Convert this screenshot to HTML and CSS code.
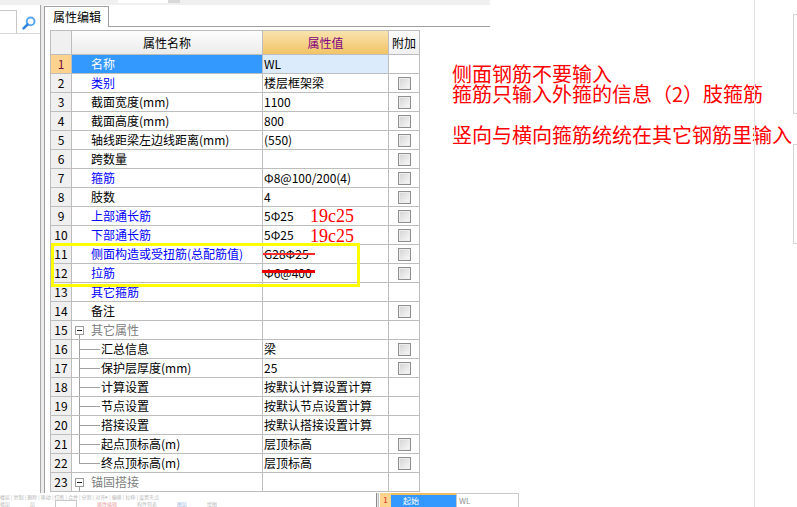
FILE: index.html
```html
<!DOCTYPE html>
<html lang="zh">
<head>
<meta charset="utf-8">
<title>属性编辑</title>
<link rel="stylesheet" href="styles.css">
</head>
<body>
<div class="page">
  <div class="work">
    <div class="topstrip"><div class="notch"></div><div class="notch2"></div></div>
    <div class="app">
      <div class="leftpane">
        <div class="searchrow">
          <div class="searchbox"></div>
          <svg class="mag" viewBox="0 0 14 14" width="14" height="14">
            <circle cx="8.6" cy="5.4" r="3.9" fill="none" stroke="#58a6ec" stroke-width="2"/>
            <line x1="5.7" y1="8.3" x2="1.6" y2="12.4" stroke="#2f86dc" stroke-width="2.6" stroke-linecap="round"/>
          </svg>
        </div>
      </div>
      <div class="splitter"></div>
      <div class="main">
        <div class="tabrow"><div class="tab">属性编辑</div><div class="tabline"></div></div>
        <div class="panel">
          <div class="gridwrap">
            <div class="grid">
              <div class="c h n"></div><div class="c h">属性名称</div><div class="c h hv">属性值</div><div class="c h ha">附加</div>

              <div class="c n nsel">1</div><div class="c nm sel">名称</div><div class="c v vsel">WL</div><div class="c a"></div>
              <div class="c n">2</div><div class="c nm blue">类别</div><div class="c v">楼层框架梁</div><div class="c a"><span class="cb"></span></div>
              <div class="c n">3</div><div class="c nm">截面宽度(mm)</div><div class="c v">1100</div><div class="c a"><span class="cb"></span></div>
              <div class="c n">4</div><div class="c nm">截面高度(mm)</div><div class="c v">800</div><div class="c a"><span class="cb"></span></div>
              <div class="c n">5</div><div class="c nm">轴线距梁左边线距离(mm)</div><div class="c v">(550)</div><div class="c a"><span class="cb"></span></div>
              <div class="c n">6</div><div class="c nm">跨数量</div><div class="c v"></div><div class="c a"><span class="cb"></span></div>
              <div class="c n">7</div><div class="c nm blue">箍筋</div><div class="c v">Φ8@100/200(4)</div><div class="c a"><span class="cb"></span></div>
              <div class="c n">8</div><div class="c nm">肢数</div><div class="c v">4</div><div class="c a"><span class="cb"></span></div>
              <div class="c n">9</div><div class="c nm blue">上部通长筋</div><div class="c v">5Φ25</div><div class="c a"><span class="cb"></span></div>
              <div class="c n">10</div><div class="c nm blue">下部通长筋</div><div class="c v">5Φ25</div><div class="c a"><span class="cb"></span></div>
              <div class="c n">11</div><div class="c nm blue">侧面构造或受扭筋(总配筋值)</div><div class="c v">G28Φ25</div><div class="c a"><span class="cb"></span></div>
              <div class="c n">12</div><div class="c nm blue">拉筋</div><div class="c v">Φ6@400</div><div class="c a"><span class="cb"></span></div>
              <div class="c n">13</div><div class="c nm blue">其它箍筋</div><div class="c v"></div><div class="c a"></div>
              <div class="c n">14</div><div class="c nm">备注</div><div class="c v"></div><div class="c a"><span class="cb"></span></div>
              <div class="c n">15</div><div class="c tr grp"><span class="node"><span class="box"></span></span>其它属性</div><div class="c v"></div><div class="c a"></div>
              <div class="c n">16</div><div class="c tr"><span class="br"></span>汇总信息</div><div class="c v">梁</div><div class="c a"><span class="cb"></span></div>
              <div class="c n">17</div><div class="c tr"><span class="br"></span>保护层厚度(mm)</div><div class="c v">25</div><div class="c a"><span class="cb"></span></div>
              <div class="c n">18</div><div class="c tr"><span class="br"></span>计算设置</div><div class="c v">按默认计算设置计算</div><div class="c a"></div>
              <div class="c n">19</div><div class="c tr"><span class="br"></span>节点设置</div><div class="c v">按默认节点设置计算</div><div class="c a"></div>
              <div class="c n">20</div><div class="c tr"><span class="br"></span>搭接设置</div><div class="c v">按默认搭接设置计算</div><div class="c a"></div>
              <div class="c n">21</div><div class="c tr"><span class="br"></span>起点顶标高(m)</div><div class="c v">层顶标高</div><div class="c a"><span class="cb"></span></div>
              <div class="c n">22</div><div class="c tr"><span class="br last"></span>终点顶标高(m)</div><div class="c v">层顶标高</div><div class="c a"><span class="cb"></span></div>
              <div class="c n">23</div><div class="c tr grp"><span class="node"><span class="box"></span></span>锚固搭接</div><div class="c v"></div><div class="c a"></div>
            </div>
            <div class="hl-box"></div>
            <div class="strike s1"></div>
            <div class="strike s2"></div>
            <div class="note19 n1">19c25</div>
            <div class="note19 n2">19c25</div>
          </div>
          <div class="notes">
            <div class="nl">侧面钢筋不要输入</div>
            <div class="nl">箍筋只输入外箍的信息（2）肢箍筋</div>
            <div class="nl gap">竖向与横向箍筋统统在其它钢筋里输入</div>
          </div>
        </div>
      </div>
    </div>
    <div class="bottombar">
      <div class="bb-left">
        <div class="bb-r1"><span class="bb-txt">楼层 | 复制 | 删除 | 移动 | 打断 | 合并 | 分割 | 对齐▾ | 偏移 | 拉伸 | 设置夹点</span></div>
        <div class="bb-r2"><span class="bb-t2">楼层</span><span class="bb-t2">层</span><span class="bb-inp"></span><span class="bb-t2 red">属性编辑</span><span class="bb-t2">构件列表</span><span class="bb-t2 bl">图层</span><span class="bb-t2">绘图</span></div>
      </div>
      <div class="bb-grid">
        <div class="bg-sep"></div>
        <div class="bg-n">1</div>
        <div class="bg-name">起始</div>
        <div class="bg-val">WL</div>
      </div>
    </div>
  </div>
  <div class="rightdock">
    <div class="dockbox"></div>
    <div class="dockbox second"></div>
  </div>
</div>
</body>
</html>
```

FILE: styles.css
```css
* { box-sizing: border-box; margin: 0; padding: 0; }
html, body { width: 797px; height: 507px; overflow: hidden; background: #fff; }
body { font-family: "Noto Sans CJK SC", "Noto Sans", sans-serif; font-size: 12px; color: #000; }

.page { display: flex; height: 507px; }
.work { width: 754px; flex: none; display: flex; flex-direction: column; }

.topstrip { width: 490px; height: 5px; background: #f0f0f0; display: flex; }
.notch { margin-left: 118px; width: 50px; height: 3px; background: #fff; }
.notch2 { width: 12px; height: 3px; background: #d8d8d8; }

.app { height: 488px; display: flex; }

.leftpane { width: 40px; flex: none; background: #fff; }
.searchrow { margin-top: 5px; height: 24px; border-bottom: 1px solid #d6d6d6; display: flex; align-items: flex-start; }
.searchbox { width: 17px; height: 23px; border-top: 1px solid #c8c8c8; border-right: 1px solid #c8c8c8; background: #fff; }
.mag { margin: 6px 0 0 5px; width: 14px; height: 14px; }

.splitter { width: 4px; flex: none; border-left: 1px solid #a8a8a8; background: #ececec; }

.main { flex: 1; display: flex; flex-direction: column; min-width: 0; }
.tabrow { height: 22px; display: flex; align-items: flex-end; }
.tab { width: 65px; height: 21px; border: 1px solid #a0a0a0; border-bottom: none; background: #fff; padding-left: 8px; line-height: 19px; font-size: 12px; }
.tabline { width: 381px; height: 1px; border-bottom: 1px solid #a0a0a0; }

.panel { flex: 1; border-left: 1px solid #a0a0a0; padding: 3px 0 0 5px; display: flex; align-items: flex-start; }

.gridwrap { position: relative; flex: none; }
.grid {
  display: grid;
  grid-template-columns: 21px 191px 126px 31px;
  grid-template-rows: 24px;
  grid-auto-rows: 19px;
  width: 370px;
  border-top: 1px solid #bdbdbd;
  border-left: 1px solid #bdbdbd;
}
.c {
  border-right: 1px solid #bdbdbd;
  border-bottom: 1px solid #bdbdbd;
  display: flex;
  align-items: center;
  white-space: nowrap;
  overflow: hidden;
  line-height: 18px;
}
.h { justify-content: center; background: linear-gradient(#fdfdfd, #ebebeb); }
.hv { background: linear-gradient(#f9e2ae, #f2c466); color: #800080; }
.ha { background: linear-gradient(#fbfbfb, #f0f0f0); }

.n { justify-content: center; background: #f0f0f0; }
.nsel { background: #ffd28e; color: #7a1040; }
.nm { padding-left: 19px; }
.blue { color: #0000ff; }
.sel { background: #3399ff; color: #fff; }
.v { padding-left: 1px; }
.vsel { background: #dcebfc; }
.a { justify-content: center; }

.cb {
  width: 13px; height: 13px;
  border: 1px solid #8f8f8f;
  background: linear-gradient(135deg, #d2d2d2, #fafafa);
  box-shadow: inset 0 0 0 1px #ededed;
}

.tr { align-items: stretch; }
.tr span { flex: none; }
.grp { color: #808080; }
.node {
  width: 9px;
  margin-left: 3px;
  margin-right: 7px;
  display: flex;
  align-items: flex-start;
  background: linear-gradient(#a0a0a0, #a0a0a0) no-repeat 4px 14px / 1px 4px;
}
.box {
  margin-top: 5px;
  width: 9px; height: 9px;
  border: 1px solid #9a9a9a;
  background: #fff;
  display: flex; align-items: center; justify-content: center;
}
.box::after { content: ""; width: 5px; height: 1px; background: #222; }
.br {
  width: 21px;
  margin-left: 7px;
  margin-right: 1px;
  background:
    linear-gradient(#a0a0a0, #a0a0a0) no-repeat 0 0 / 1px 100%,
    linear-gradient(#a0a0a0, #a0a0a0) no-repeat 0 9px / 100% 1px;
}
.br.last {
  background:
    linear-gradient(#a0a0a0, #a0a0a0) no-repeat 0 0 / 1px 10px,
    linear-gradient(#a0a0a0, #a0a0a0) no-repeat 0 9px / 100% 1px;
}

/* annotations drawn over the grid */
.hl-box { position: absolute; left: 1px; top: 213px; width: 309px; height: 44px; border: 3px solid #ffff00; }
.strike { position: absolute; }
.s1 { left: 213px; top: 223px; width: 52px; height: 2px; background: #ff2a2a; }
.s2 { left: 212px; top: 240px; width: 53px; height: 3px; background: #e80000; }
.note19 { position: absolute; left: 260px; font-family: "Liberation Serif", serif; font-size: 18px; line-height: 18px; color: #ff0000; }
.n1 { top: 177px; }
.n2 { top: 197px; }

.notes {
  flex: none;
  margin: 34px 0 0 32px;
  color: #ff0000;
  font-size: 20px;
  white-space: nowrap;
}
.nl { height: 20.3px; line-height: 20.3px; }
.nl.gap { margin-top: 20.3px; }

.bottombar { height: 14px; display: flex; overflow: hidden; }
.bb-left { width: 376px; flex: none; display: flex; flex-direction: column; }
.bb-r1 { height: 7px; display: flex; align-items: center; }
.bb-txt { font-size: 5px; line-height: 7px; color: #b6b6b6; white-space: nowrap; }
.bb-r2 { height: 7px; display: flex; gap: 20px; align-items: center; }
.bb-t2 { font-size: 5px; line-height: 7px; color: #bdbdbd; white-space: nowrap; }
.bb-t2.red { color: #e8a0a0; }
.bb-t2.bl { color: #a0b8e0; }
.bb-inp { width: 22px; height: 7px; border: 1px solid #c8c8c8; border-bottom: none; background: #fff; }

.bb-grid { display: flex; height: 14px; }
.bg-sep { width: 3px; border-left: 1px solid #8a8a8a; border-right: 1px solid #c0c0c0; background: #e8e8e8; margin-right: 1px; }
.bg-n { width: 11px; background: #ffd28e; color: #c03030; font-size: 8px; line-height: 14px; text-align: center; }
.bg-name { width: 65px; background: #3399ff; border-top: 2px solid #f0be60; color: #fff; font-size: 8px; line-height: 12px; padding-left: 12px; }
.bg-val { width: 63px; border: 1px solid #c8c8c8; border-bottom: none; color: #909090; font-size: 8px; line-height: 13px; padding-left: 2px; }

.rightdock { width: 43px; flex: none; border-left: 1px solid #e2e2e2; padding-left: 38px; }
.dockbox { margin-top: 14px; height: 100px; border: 1px solid #d4d4d4; border-right: none; }
.dockbox.second { margin-top: 30px; }
```
